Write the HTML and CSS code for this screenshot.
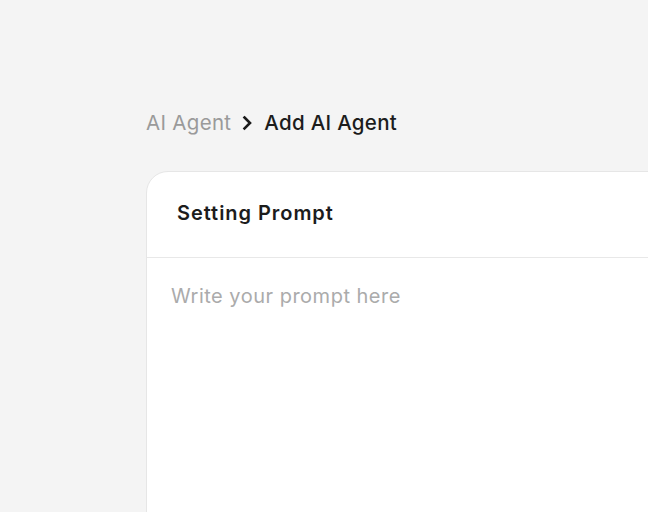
FILE: index.html
```html
<!DOCTYPE html>
<html>
<head>
<meta charset="utf-8">
<link rel="stylesheet" href="styles.css">
</head>
<body>
<main class="page">
  <nav class="crumbs">
    <span class="crumb-muted">AI Agent</span>
    <svg class="chev" width="11" height="16" viewBox="0 0 11 16"><path d="M2.5 2.5 L8 8 L2.5 13.5" fill="none" stroke="#1a1a1a" stroke-width="2.6" stroke-linecap="square"/></svg>
    <span class="crumb-current">Add AI Agent</span>
  </nav>
  <section class="card">
    <header class="card-head">
      <h2 class="card-title">Setting Prompt</h2>
    </header>
    <div class="card-body">
      <textarea class="prompt" placeholder="Write your prompt here"></textarea>
    </div>
  </section>
</main>
</body>
</html>
```

FILE: styles.css
```css
html, body {
  margin: 0;
  height: 100%;
}
body {
  background: #f4f4f4;
  font-family: Inter, "Noto Sans", sans-serif;
  overflow: hidden;
}
.page {
  padding: 108px 0 0 146px;
}
.crumbs {
  display: flex;
  align-items: center;
  gap: 11px;
  font-size: 20.5px;
  letter-spacing: 0.3px;
  line-height: 30px;
  height: 30px;
}
.crumb-muted {
  color: #9a9a9a;
}
.crumb-current {
  color: #1c1c1c;
  font-weight: 500;
}
.chev {
  display: block;
}
.card {
  margin-top: 33px;
  width: 900px;
  height: 500px;
  background: #fff;
  border: 1px solid #e6e6e6;
  border-radius: 22px;
  box-sizing: border-box;
}
.card-head {
  height: 86px;
  display: flex;
  align-items: center;
  padding: 0 30px;
  border-bottom: 1px solid #e8e8e8;
  box-sizing: border-box;
}
.card-title {
  margin: 0 0 4px;
  font-size: 20px;
  font-weight: 600;
  letter-spacing: 0.95px;
  color: #1c1c1c;
}
.card-body {
  padding: 25px 24px;
}
.prompt {
  border: none;
  outline: none;
  resize: none;
  width: 100%;
  height: 200px;
  padding: 0;
  font-family: Inter, "Noto Sans", sans-serif;
  font-size: 20px;
  letter-spacing: 0.5px;
  line-height: 26px;
  color: #1c1c1c;
}
.prompt::placeholder {
  color: #ababab;
}
```
